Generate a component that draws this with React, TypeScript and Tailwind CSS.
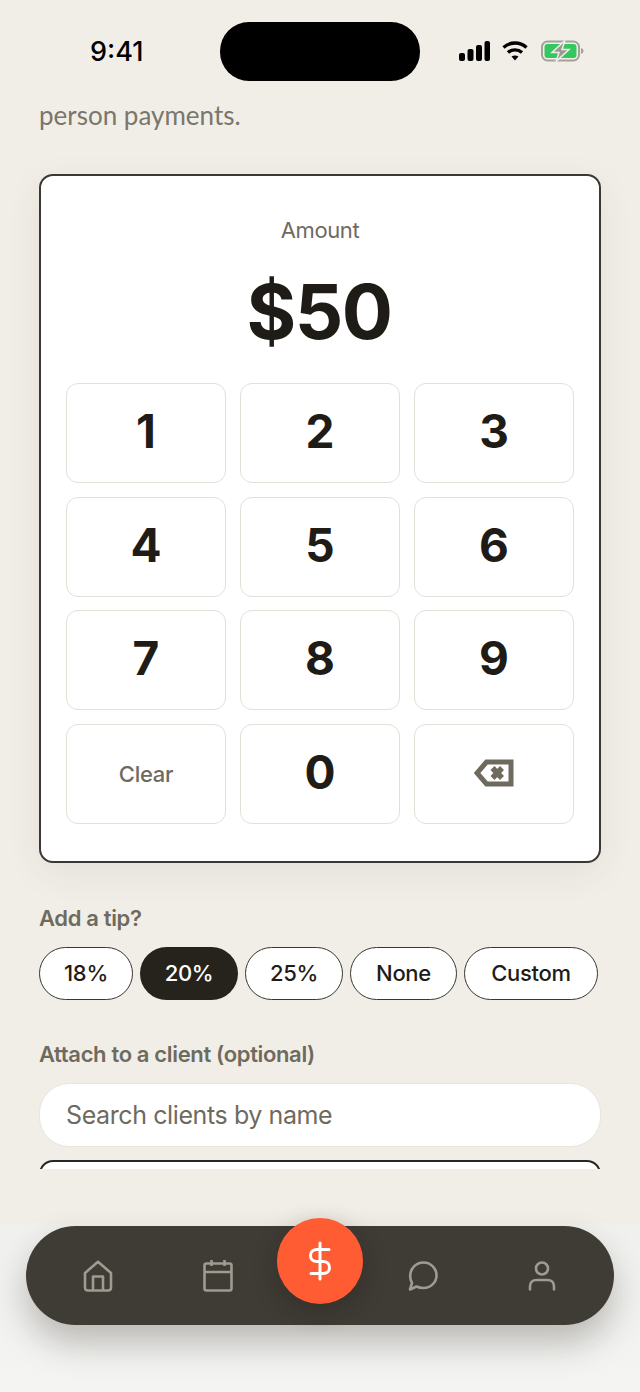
const keys = ['1', '2', '3', '4', '5', '6', '7', '8', '9'];

const tips = [
  { label: '18%', width: 'w-[94px]' },
  { label: '20%', width: 'w-[98px]', active: true },
  { label: '25%', width: 'w-[98px]' },
  { label: 'None', width: 'w-[107px]' },
  { label: 'Custom', width: 'w-[134px]' },
];

function StatusBar() {
  return (
    <div className="flex h-[100px] shrink-0 items-start">
      <div className="mt-[35px] ml-[90px] w-[130px] text-[27px] leading-[34px] font-medium text-black">9:41</div>
      <div className="mt-[22px] h-[59px] w-[200px] rounded-[29px] bg-black" />
      <div className="mt-[40px] ml-[39px] flex items-center">
        <svg width="31" height="22" viewBox="0 0 31 22" fill="#000">
          <rect x="0" y="13" width="6" height="8" rx="2" />
          <rect x="8.5" y="9" width="6" height="12" rx="2" />
          <rect x="17" y="5" width="6" height="16" rx="2" />
          <rect x="25.5" y="1" width="5.5" height="20" rx="2" />
        </svg>
        <svg className="ml-[12px]" width="26" height="22" viewBox="0 0 26 22" fill="none" stroke="#000" strokeWidth="3.4">
          <path d="M1.5 7.5C8 1.5 18 1.5 24.5 7.5" />
          <path d="M6 12.5C10 9 16 9 20 12.5" />
          <path d="M13 20.5L9.5 16.5C11.5 15 14.5 15 16.5 16.5Z" fill="#000" stroke="none" />
        </svg>
        <svg className="ml-[13px]" width="43" height="22" viewBox="0 0 43 22" fill="none">
          <rect x="1" y="1.5" width="37" height="19" rx="5.5" stroke="#a3a199" strokeWidth="2" />
          <rect x="3.5" y="4" width="32" height="14" rx="3" fill="#35c75f" />
          <path d="M40 8v6c1.500-.4 2.500-1.600 2.500-3S41.500 8.400 40 8Z" fill="#a3a199" />
          <path d="M24 0.500L11 12.500H18L15 21.500L28 9.500H21Z" fill="#9a9890" stroke="#f1eee7" strokeWidth="1.500" />
        </svg>
      </div>
    </div>
  );
}

function Backspace() {
  return (
    <svg className="mb-[3px]" width="40" height="28" viewBox="0 0 40 28" fill="none" stroke="#6f6a5e">
      <path d="M37 3H12.500L3 14L12.500 25H37Z" strokeWidth="5" />
      <path d="M18.500 9L28 19M28 9L18.500 19" strokeWidth="5.500" />
    </svg>
  );
}

function KeyBox({ children }: { children: React.ReactNode }) {
  return (
    <button className="flex h-[100px] items-center justify-center rounded-[12px] border border-[#e3e0d8] bg-white">
      {children}
    </button>
  );
}

function BottomNav() {
  return (
    <div className="flex h-[169px] shrink-0 bg-gradient-to-b from-[#f0f0ee] to-[#f4f4f3] px-[26px] pt-[3px]">
      <nav className="flex h-[99px] w-[588px] items-center rounded-[50px] bg-[#3f3b35] pl-[57px] shadow-[0_18px_34px_rgba(40,35,25,0.28)]">
        <svg width="30" height="32" viewBox="0 0 30 32" fill="none" stroke="#a09b90" strokeWidth="2.6" strokeLinejoin="round">
          <path d="M2 13L15 1.800L28 13V27.500C28 29.500 27 30.500 25 30.500H5C3 30.500 2 29.500 2 27.500Z" />
          <path d="M10 30.500V16.500H20V30.500" />
        </svg>
        <svg className="ml-[90px]" width="30" height="33" viewBox="0 0 30 33" fill="none" stroke="#a09b90" strokeWidth="2.6" strokeLinejoin="round">
          <rect x="1.500" y="4.500" width="27" height="27" rx="2" />
          <path d="M1.500 13H28.500M8.500 1V7M21.500 1V7" />
        </svg>
        <button className="mb-auto ml-[44px] -mt-[8px] flex h-[86px] w-[86px] shrink-0 items-center justify-center rounded-full bg-[#ff5c33] shadow-[0_8px_24px_rgba(30,25,15,0.3)]">
          <svg width="24" height="40" viewBox="0 0 24 40" fill="none" stroke="#fff" strokeWidth="3" strokeLinecap="round">
            <path d="M12 2V38" />
            <path d="M21 8.500H9C5 8.500 2.500 11 2.500 14.500S5 20.500 9 20.500H15C19 20.500 21.500 23 21.500 26.500S19 32.500 15 32.500H3" />
          </svg>
        </button>
        <svg className="ml-[45px]" width="30" height="30" viewBox="0 0 30 30" fill="none" stroke="#a09b90" strokeWidth="2.6" strokeLinejoin="round">
          <path d="M2 28.500L4 22C2.800 20 2.200 17.500 2.200 15C2.200 7.500 8 1.500 15.500 1.500S28.500 7.500 28.500 14.500S22.500 27 15.500 27C13 27 10.500 26.500 8.500 25.500Z" />
        </svg>
        <svg className="ml-[90px]" width="28" height="30" viewBox="0 0 28 30" fill="none" stroke="#a09b90" strokeWidth="2.6" strokeLinecap="round">
          <circle cx="14" cy="7.500" r="6" />
          <path d="M2 28.500V25.500C2 21.500 4.500 19 8.500 19H19.500C23.500 19 26 21.500 26 25.500V28.500" />
        </svg>
      </nav>
    </div>
  );
}

export default function App() {
  return (
    <div className="flex h-[1392px] w-[640px] flex-col overflow-hidden bg-[#f1eee7] font-['Inter',sans-serif]">
      <StatusBar />

      <main className="h-[1069px] shrink-0 overflow-hidden px-[39px]">
        <p className="-mt-[1px] font-['Lato',sans-serif] text-[26px] leading-[32px] text-[#7a766b]">person payments.</p>

        {/* Amount card */}
        <section className="mt-[43px] h-[689px] rounded-[14px] border-2 border-[#3c3833] bg-white px-[25px] shadow-[0_10px_36px_rgba(70,60,40,0.07)]">
          <p className="mt-[39px] text-center text-[22px] leading-[30px] tracking-[-0.4px] text-[#6f6a5e]">Amount</p>
          <p className="mt-[20px] pr-[2px] text-center text-[76px] leading-[92px] font-bold tracking-[-1.500px] text-[#1f1c17]">$50</p>
          <div className="mt-[26px] grid grid-cols-3 gap-x-[14px] gap-y-[13.700px]">
            {keys.map((key) => (
              <KeyBox key={key}>
                <span className="pb-[3px] text-[46px] font-bold text-[#1f1c17]">{key}</span>
              </KeyBox>
            ))}
            <KeyBox>
              <span className="text-[22px] font-medium tracking-[-0.3px] text-[#6f6a5e]">Clear</span>
            </KeyBox>
            <KeyBox>
              <span className="pb-[3px] text-[46px] font-bold text-[#1f1c17]">0</span>
            </KeyBox>
            <KeyBox>
              <Backspace />
            </KeyBox>
          </div>
        </section>

        {/* Tip */}
        <p className="mt-[40px] text-[22px] leading-[30px] font-semibold tracking-[-0.35px] text-[#6f6a5e]">Add a tip?</p>
        <div className="mt-[14px] flex gap-[7px]">
          {tips.map((tip) =>
            tip.active ? (
              <button key={tip.label} className={`${tip.width} h-[53px] rounded-full bg-[#26231c] text-[22px] font-medium tracking-[-0.3px] text-white`}>
                {tip.label}
              </button>
            ) : (
              <button key={tip.label} className={`${tip.width} h-[53px] rounded-full border border-[#3a362f] bg-white text-[22px] font-medium tracking-[-0.3px] text-[#1f1c17]`}>
                {tip.label}
              </button>
            ),
          )}
        </div>

        {/* Client */}
        <p className="mt-[39px] text-[22px] leading-[30px] font-semibold tracking-[-0.35px] text-[#6f6a5e]">Attach to a client (optional)</p>
        <input
          readOnly
          placeholder="Search clients by name"
          className="mt-[14px] h-[64px] w-full rounded-[30px] border border-[#e8e5dd] bg-white px-[26px] text-[25px] tracking-[-0.4px] outline-none placeholder:text-[#6f6a5e]"
        />
        <div className="mt-[13px] h-[40px] rounded-[14px] border-2 border-[#2a2722] bg-white" />
      </main>

      <div className="h-[54px] shrink-0" />
      <BottomNav />
    </div>
  );
}
